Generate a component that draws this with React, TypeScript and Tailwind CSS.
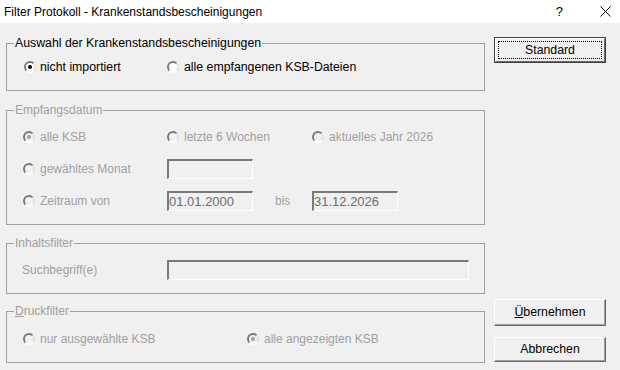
import React from 'react';

const font = { fontFamily: '"Liberation Sans", Arial, sans-serif' };

function Radio({ label, checked, disabled, gap = 'gap-[5px]' }: { label: string; checked?: boolean; disabled?: boolean; gap?: string }) {
  return (
    <div className={`flex items-center h-5 ${gap}`}>
      <span
        className={`relative flex items-center justify-center w-3 h-3 rounded-full border-2 border-t-[#7a7a7a] border-l-[#7a7a7a] border-r-[#e3e3e3] border-b-[#ffffff] ${
          disabled ? 'bg-[#f0f0f0]' : 'bg-white'
        }`}
      >
        {checked && <span className={`w-1 h-1 rounded-full ${disabled ? 'bg-[#a0a0a0]' : 'bg-black'}`}></span>}
      </span>
      <span className={disabled ? 'text-[12px] text-[#a0a0a0]' : 'text-[12.3px] text-black'}>{label}</span>
    </div>
  );
}

function Field({ value, width }: { value?: string; width: string }) {
  return (
    <div
      className={`${width} h-5 flex items-center border-t-2 border-l-2 border-b border-r border-t-[#7a7a7a] border-l-[#7a7a7a] border-b-white border-r-white bg-[#f0f0f0] text-[13px] text-[#6d6d6d] leading-none`}
    >
      {value}
    </div>
  );
}

function Button({ children, isDefault, height }: { children: React.ReactNode; isDefault?: boolean; height: string }) {
  if (isDefault) {
    return (
      <div className={`w-[112px] ${height} border border-[#404040]`}>
        <div className="w-full h-full border border-t-white border-l-white border-b-[#696969] border-r-[#696969] p-[2px]">
          <div className="w-full h-full border border-dotted border-black flex items-center justify-center text-[12.3px] text-black">
            {children}
          </div>
        </div>
      </div>
    );
  }
  return (
    <div
      className={`w-[112px] ${height} border border-t-white border-l-white border-b-[#696969] border-r-[#696969] shadow-[inset_-1px_-1px_0_#a0a0a0] flex items-center justify-center text-[12.3px] text-black`}
    >
      {children}
    </div>
  );
}

export default function App() {
  return (
    <div className="w-[620px] h-[370px] bg-[#f0f0f0] overflow-hidden" style={font}>
      {/* title bar */}
      <div className="h-[23px] bg-white flex items-center text-[12px] text-black">
        <span className="ml-[4px]">Filter Protokoll - Krankenstandsbescheinigungen</span>
        <span className="ml-auto text-[13px]">?</span>
        <svg className="ml-[37px] mr-[9px]" width="11" height="11" viewBox="0 0 11 11">
          <path d="M0.5 0.5 L10.5 10.5 M10.5 0.5 L0.5 10.5" stroke="#000" strokeWidth="1" />
        </svg>
      </div>

      <div className="flex">
        <div className="w-[479px] ml-[6px]">
          {/* Auswahl */}
          <fieldset className="mt-[12px] h-[56px] border border-[#a0a0a0] p-0">
            <legend className="ml-[7px] px-[1px] leading-4 text-[12.3px] text-black">Auswahl der Krankenstandsbescheinigungen</legend>
            <div className="flex pl-[17px] mt-[6px]">
              <div className="w-[143px]">
                <Radio label="nicht importiert" checked gap="gap-[4px]" />
              </div>
              <Radio label="alle empfangenen KSB-Dateien" />
            </div>
          </fieldset>

          {/* Empfangsdatum */}
          <fieldset className="mt-[11px] h-[123px] border border-[#a0a0a0] p-0">
            <legend className="ml-[7px] px-[1px] leading-4 text-[12px] text-[#a0a0a0]">Empfangsdatum</legend>
            <div className="pl-[16px] mt-[9px] flex flex-col gap-3">
              <div className="flex">
                <div className="w-[144px]">
                  <Radio label="alle KSB" checked disabled />
                </div>
                <div className="w-[145px]">
                  <Radio label="letzte 6 Wochen" disabled />
                </div>
                <Radio label="aktuelles Jahr 2026" disabled />
              </div>
              <div className="flex">
                <div className="w-[144px]">
                  <Radio label="gewähltes Monat" disabled />
                </div>
                <Field width="w-[86px]" />
              </div>
              <div className="flex">
                <div className="w-[144px]">
                  <Radio label="Zeitraum von" disabled />
                </div>
                <Field width="w-[86px]" value="01.01.2000" />
                <div className="w-[59px] pl-[22px] flex items-center text-[12px] text-[#a0a0a0]">bis</div>
                <Field width="w-[86px]" value="31.12.2026" />
              </div>
            </div>
          </fieldset>

          {/* Inhaltsfilter */}
          <fieldset className="mt-[10px] h-[59px] border border-[#a0a0a0] p-0">
            <legend className="ml-[7px] px-[1px] leading-4 text-[12px] text-[#a0a0a0]">Inhaltsfilter</legend>
            <div className="flex pl-[15px] mt-[9px]">
              <div className="w-[145px] flex items-center text-[12px] text-[#a0a0a0]">Suchbegriff(e)</div>
              <Field width="w-[302px]" />
            </div>
          </fieldset>

          {/* Druckfilter */}
          <fieldset className="mt-[9px] h-[60px] border border-[#a0a0a0] p-0">
            <legend className="ml-[7px] px-[1px] leading-4 text-[12px] text-[#a0a0a0]">
              <span className="underline">D</span>ruckfilter
            </legend>
            <div className="flex pl-[16px] mt-[10px]">
              <div className="w-[224px]">
                <Radio label="nur ausgewählte KSB" disabled />
              </div>
              <Radio label="alle angezeigten KSB" checked disabled />
            </div>
          </fieldset>
        </div>

        <div className="ml-[9px] flex flex-col">
          <div className="mt-[14px]">
            <Button isDefault height="h-[26px]">Standard</Button>
          </div>
          <div className="mt-[236px]">
            <Button height="h-[27px]">
              <span>
                <span className="underline">Ü</span>bernehmen
              </span>
            </Button>
          </div>
          <div className="mt-[11px]">
            <Button height="h-[25px]">Abbrechen</Button>
          </div>
        </div>
      </div>
    </div>
  );
}
